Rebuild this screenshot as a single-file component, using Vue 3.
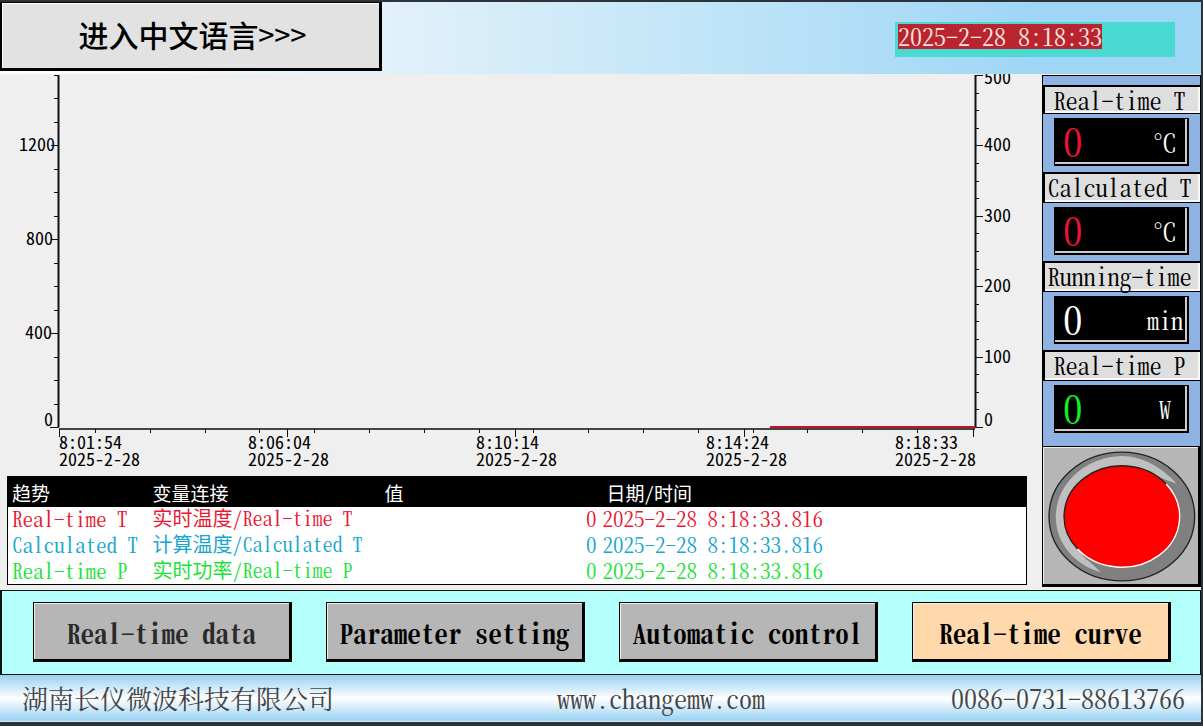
<script setup>
const leftTicks = Array.from({ length: 16 }, (_, i) => {
  const major = i % 4 === 0
  return { y: Math.round(427 - i * 23.47), len: i === 0 ? 8 : major ? 7 : 4 }
})
const leftLabels = [
  { text: '1200', x: 55, y: 151 },
  { text: '800', x: 53, y: 245 },
  { text: '400', x: 52, y: 339 },
  { text: '0', x: 53, y: 426 },
]
const rightTicks = Array.from({ length: 21 }, (_, i) => ({
  y: Math.round(427 - i * 17.6),
  len: i % 4 === 0 ? 8 : 4,
}))
const rightLabels = [
  { text: '500', y: 84 },
  { text: '400', y: 151 },
  { text: '300', y: 222 },
  { text: '200', y: 292 },
  { text: '100', y: 363 },
  { text: '0', y: 426 },
]
const timeTicks = Array.from({ length: 16 }, (_, i) => Math.round(96 + i * 54.8))
const timeLabels = [
  { tick: 60, x: 59, time: '8:01:54' },
  { tick: 288, x: 248, time: '8:06:04' },
  { tick: 516, x: 476, time: '8:10:14' },
  { tick: 745, x: 706, time: '8:14:24' },
  { tick: 974, x: 895, time: '8:18:33' },
]
const date = '2025-2-28'

const rows = [
  { name: 'Real-time T', source: '实时温度', tone: 'red' },
  { name: 'Calculated T', source: '计算温度', tone: 'blue' },
  { name: 'Real-time P', source: '实时功率', tone: 'green' },
]
const readouts = [
  { label: 'Real-time T', value: '0', unit: '℃', tone: 'red' },
  { label: 'Calculated T', value: '0', unit: '℃', tone: 'red' },
  { label: 'Running-time', value: '0', unit: 'min', tone: 'white' },
  { label: 'Real-time P', value: '0', unit: 'W', tone: 'green' },
]
const pages = [
  { text: 'Real-time data', tone: 'dim' },
  { text: 'Parameter setting', tone: '' },
  { text: 'Automatic control', tone: '' },
  { text: 'Real-time curve', tone: 'active' },
]
</script>

<template>
  <div class="screen">
    <header class="top">
      <button type="button" class="language">进入中文语言<span class="arrows">&gt;&gt;&gt;</span></button>
      <div class="banner">
        <div class="clock"><time class="clock-text">2025-2-28 8:18:33</time></div>
      </div>
    </header>

    <main class="main">
      <section class="trend">
        <svg class="chart" viewBox="0 74 1034 400" role="img" aria-label="Trend chart">
          <g class="axis">
            <path d="M58.5 75V427M975.5 75V427" class="side-axis" />
            <path d="M59 429H975" class="base" />
            <path v-for="t in leftTicks" :key="'l' + t.y" :d="`M${58 - t.len} ${t.y + 0.5}H59`" />
            <path v-for="t in rightTicks" :key="'r' + t.y" :d="`M975 ${t.y + 0.5}h${t.len}`" />
            <path v-for="x in timeTicks" :key="'t' + x" :d="`M${x - 0.5} 429V433`" />
            <path v-for="t in timeLabels" :key="'m' + t.tick" :d="`M${t.tick - 0.5} 429V437`" />
          </g>
          <path d="M770 427H975" class="series" />
          <g class="labels">
            <text v-for="l in leftLabels" :key="'a' + l.text" :x="l.x" :y="l.y" text-anchor="end">{{ l.text }}</text>
            <text v-for="l in rightLabels" :key="'b' + l.text" x="984" :y="l.y">{{ l.text }}</text>
            <template v-for="t in timeLabels" :key="t.time">
              <text :x="t.x" y="449">{{ t.time }}</text>
              <text :x="t.x" y="466">{{ date }}</text>
            </template>
          </g>
        </svg>

        <table class="legend">
          <colgroup>
            <col class="c-name" /><col class="c-link" /><col class="c-value" /><col />
          </colgroup>
          <thead>
            <tr><th>趋势</th><th>变量连接</th><th>值</th><th>日期/时间</th></tr>
          </thead>
          <tbody>
            <tr v-for="r in rows" :key="r.name" :class="r.tone">
              <td>{{ r.name }}</td>
              <td class="link"><span class="han">{{ r.source }}</span>/{{ r.name }}</td>
              <td class="num">0</td>
              <td>2025-2-28 8:18:33.816</td>
            </tr>
          </tbody>
        </table>
      </section>

      <aside class="side">
        <section v-for="r in readouts" :key="r.label" class="readout">
          <h2 class="caption">{{ r.label }}</h2>
          <div class="well">
            <div class="lcd">
              <span class="value" :class="r.tone">{{ r.value }}</span>
              <span class="unit">{{ r.unit }}</span>
            </div>
          </div>
        </section>
        <button type="button" class="lamp" aria-label="Power">
          <svg viewBox="42 38 462 408">
            <ellipse cx="277" cy="245" rx="217" ry="192" fill="#808080" stroke="#222" stroke-width="4" />
            <path
              d="M440 147C396 98 338 66 277 65C165 68 80 150 80 248C82 330 140 390 215 411C198 396 185 382 168 370L145 340L106 245L150 145L277 94L380 125Z"
              fill="#c0c0c0"
            />
            <ellipse cx="277" cy="245" rx="172" ry="151" fill="#fe0000" />
            <path d="M145 342A172 151 0 0 1 409 148" fill="none" stroke="#222" stroke-width="4" />
            <path d="M409 148A172 151 0 0 1 145 342" fill="none" stroke="#fff" stroke-width="4" />
          </svg>
        </button>
      </aside>
    </main>

    <nav class="nav">
      <button v-for="p in pages" :key="p.text" type="button" class="page" :class="p.tone">{{ p.text }}</button>
    </nav>

    <footer class="foot">
      <span>湖南长仪微波科技有限公司</span>
      <span>www.changemw.com</span>
      <span>0086-0731-88613766</span>
    </footer>
  </div>
</template>

<style>
body {
  background: #2c333b;
}
</style>

<style scoped>
.screen,
.screen * {
  box-sizing: border-box;
}
.screen {
  display: flex;
  flex-direction: column;
  min-height: 100vh;
  padding: 2px 2px 4px 0;
  background: #2c333b;
  color: #000;
  font-family: "Noto Serif CJK SC", "Noto Sans CJK SC", "Liberation Serif", serif;
  font-feature-settings: "hwid";
  font-weight: 400;
}
button {
  margin: 0;
  padding: 0;
  font: inherit;
  font-feature-settings: inherit;
  color: inherit;
}

.top {
  display: flex;
  height: 72px;
  padding-bottom: 3px;
  background: linear-gradient(90deg, #fff 0%, #e2f1fa 32%, #b8e1f7 66%, #9fd6f6 86%, #9fd6f6 100%);
}
.language {
  width: 32%;
  max-width: 382px;
  border: 1px solid #000;
  border-width: 1px 3px 3px 2px;
  background: #e2e2e2;
  box-shadow: inset 1px 1px 0 #fff;
  font-family: "Noto Sans CJK SC", sans-serif;
  font-size: 30px;
  line-height: 40px;
  font-weight: 500;
  padding: 0 0 4px 4px;
}
.arrows {
  font-size: 32px;
  font-weight: 400;
}
.banner {
  flex: 1;
  display: flex;
  justify-content: flex-end;
  align-items: flex-start;
  padding: 20px 26px 0 0;
}
.clock {
  width: 280px;
  height: 35px;
  padding: 2px 3px;
  background: #4adad1;
}
.clock-text {
  display: block;
  width: max-content;
  height: 25px;
  background: #b8252f;
  color: #fde4e0;
  font-size: 24px;
  line-height: 24px;
}

.main {
  flex: 1;
  display: flex;
  background: #efefef;
}
.trend {
  flex: 1;
  padding-right: 8px;
}
.chart {
  display: block;
  width: 100%;
}
.axis path {
  fill: none;
  stroke: #111;
  stroke-width: 1;
}
.axis .side-axis {
  stroke-width: 2;
}
.axis .base {
  stroke: #444;
  stroke-width: 2;
}
.chart .series {
  stroke: #c4122c;
  stroke-width: 2;
}
.labels {
  font-family: "Noto Sans CJK SC", sans-serif;
  font-size: 18px;
  font-weight: 400;
}

.legend {
  width: calc(100% - 14px);
  margin: 2px 7px 0;
  table-layout: fixed;
  border-collapse: collapse;
  border: 1px solid #000;
  background: #fff;
  font-size: 21px;
  line-height: 22px;
  white-space: nowrap;
}
.c-name { width: 141px; }
.c-link { width: 232px; }
.c-value { width: 218px; }
.legend th {
  height: 30px;
  padding: 2px 4px 0;
  background: #000;
  color: #fff;
  font-family: "Noto Sans CJK SC", sans-serif;
  font-size: 19px;
  font-weight: 400;
  text-align: left;
}
.legend th:last-child {
  padding-left: 8px;
}
.legend td {
  height: 26px;
  padding: 0 4px 3px;
}
.legend .link {
  font-size: 20px;
}
.han {
  font-family: "Noto Sans CJK SC", sans-serif;
  font-weight: 400;
}
.legend .num {
  text-align: right;
  padding-right: 2px;
}
.legend .red { color: #ea1734; }
.legend .blue { color: #16a6cf; }
.legend .green { color: #1be23a; }

.side {
  width: 159px;
  display: flex;
  flex-direction: column;
  margin: 1px 0 3px;
  padding-top: 9px;
  border: 1px solid #000;
  border-width: 1px 1px 0;
  background: #8eb3e3;
}
.caption {
  height: 31px;
  margin: 0;
  padding-right: 6px;
  border: 1px solid #000;
  border-width: 2px 0 1px 2px;
  background: #dedede;
  box-shadow: inset -2px -2px 0 #f8f8f8;
  font-size: 24px;
  line-height: 26px;
  font-weight: 400;
  text-align: center;
  white-space: nowrap;
}
.readout:first-child .caption {
  height: 29px;
}
.well {
  height: 58px;
  padding: 4px 11px 0 11px;
}
.readout:nth-of-type(4) {
  flex: 1;
}
.lcd {
  display: flex;
  justify-content: space-between;
  align-items: center;
  height: 48px;
  padding: 0 3px 0 8px;
  border: 1px solid #000;
  border-right-width: 2px;
  border-bottom-width: 2px;
  background: #000;
  box-shadow: inset -2px -2px 0 #ccc;
  color: #fff;
}
.value {
  font-size: 39px;
  line-height: 40px;
  padding-bottom: 3px;
}
.value.red { color: #ee1236; }
.value.green { color: #12ef2c; }
.unit {
  width: 38px;
  font-size: 24px;
  line-height: 40px;
  text-align: center;
}
.lamp {
  height: 141px;
  border: 1px solid #000;
  border-width: 1px 2px 3px 0;
  background: #b6b6b6;
  box-shadow: inset 1px 1px 0 #eee;
}
.lamp svg {
  display: block;
  width: 100%;
  height: 100%;
}

.nav {
  display: flex;
  gap: 34px;
  height: 85px;
  padding: 11px 29px 11px 31px;
  border: 1px solid #111;
  border-left-width: 2px;
  background: #b3fffb;
}
.page {
  flex: 1;
  height: 60px;
  padding-top: 3px;
  border: 1px solid #000;
  border-width: 1px 3px 3px 1px;
  background: #b6b6b6;
  box-shadow: inset 1px 1px 0 #eee;
  font-size: 27px;
  line-height: 40px;
  font-weight: 700;
  white-space: nowrap;
}
.page.dim { color: #2a2a2a; }
.page.active { background: #ffd9ac; }

.foot {
  display: grid;
  grid-template-columns: 46% 1fr auto;
  height: 47px;
  padding: 0 16px 0 22px;
  background: linear-gradient(180deg, #98d0f2 0%, #fff 50%, #9bd3f3 96%, #e8f2f8 100%);
  color: #444;
  font-size: 26px;
  line-height: 46px;
  white-space: nowrap;
}
</style>
